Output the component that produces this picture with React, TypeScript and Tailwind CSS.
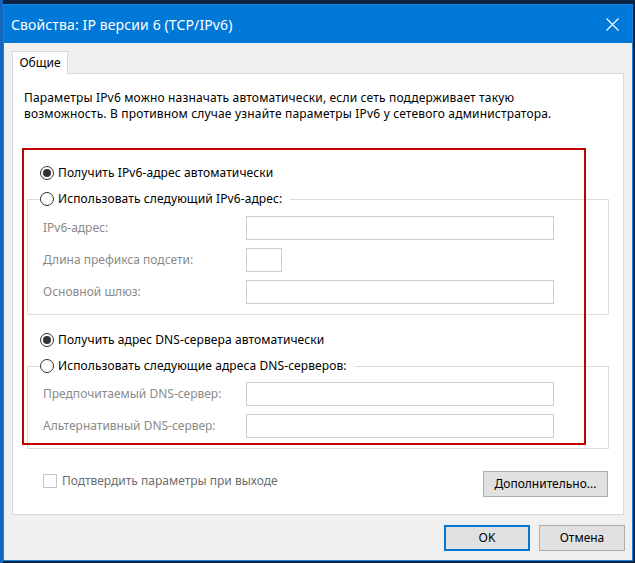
import React from "react";

function Radio({ checked, label }: { checked?: boolean; label: string }) {
  return (
    <div className="flex items-center h-[16px] gap-[4px]">
      <span className="w-[14px] h-[14px] rounded-full border border-[#333333] bg-white flex items-center justify-center shrink-0">
        {checked && <span className="w-[8px] h-[8px] rounded-full bg-[#333333]" />}
      </span>
      <span className="leading-[16px] whitespace-nowrap tracking-[0.1px]">{label}</span>
    </div>
  );
}

function Field({ label, narrow }: { label: string; narrow?: boolean }) {
  return (
    <div className="flex items-center h-[24px]">
      <span className="w-[218px] pl-[15px] shrink-0 text-[#8a8a8a] whitespace-nowrap">{label}</span>
      <div className={(narrow ? "w-[36px]" : "w-[308px]") + " h-[24px] border border-[#cccccc] bg-white"} />
    </div>
  );
}

export default function App() {
  return (
    <div className="w-[635px] h-[563px] bg-[#0c2444] border-l-[3px] border-l-[#1566bf] pt-[4px] overflow-hidden font-['Noto_Sans',sans-serif] text-[12px] text-black">
      <div className="w-[630px] h-[557px] border border-[#1883d7] bg-[#f0f0f0] flex flex-col">
        <div className="h-[38px] shrink-0 bg-[#0078d7] flex items-center justify-between pl-[7px] pr-[13px] text-white">
          <span className="text-[14px] tracking-[0.12px]">Свойства: IP версии 6 (TCP/IPv6)</span>
          <svg width="13" height="13" viewBox="0 0 13 13">
            <path d="M0.5 0.5L12.5 12.5M12.5 0.5L0.5 12.5" stroke="white" strokeWidth="1.1" fill="none" />
          </svg>
        </div>
        <div className="px-[8px] pt-[8px] flex flex-col">
          <div className="w-[56px] h-[23px] border border-b-0 border-[#d9d9d9] bg-white relative z-10 flex items-center justify-center">
            <span className="leading-[16px]">Общие</span>
          </div>
          <div className="mt-[-1px] w-[612px] h-[442px] border border-[#d9d9d9] bg-white relative flex flex-col">
            <div className="ml-[11px] mt-[16px] tracking-[0.17px]">
              <div className="h-[16px] leading-[16px] whitespace-nowrap">
                Параметры IPv6 можно назначать автоматически, если сеть поддерживает такую
              </div>
              <div className="h-[16px] leading-[16px] whitespace-nowrap">
                возможность. В противном случае узнайте параметры IPv6 у сетевого администратора.
              </div>
            </div>

            <div className="ml-[27px] mt-[43px]">
              <Radio checked label="Получить IPv6-адрес автоматически" />
            </div>
            <div className="ml-[27px] mt-[10px] relative z-10 bg-white w-fit pr-[8px]">
              <Radio label="Использовать следующий IPv6-адрес:" />
            </div>
            <div className="ml-[14px] w-[582px] mt-[-8px] border border-[#dcdcdc] pt-[16px] pb-[10px] flex flex-col gap-[8px]">
              <Field label="IPv6-адрес:" />
              <Field label="Длина префикса подсети:" narrow />
              <Field label="Основной шлюз:" />
            </div>

            <div className="ml-[27px] mt-[17px]">
              <Radio checked label="Получить адрес DNS-сервера автоматически" />
            </div>
            <div className="ml-[27px] mt-[10px] relative z-10 bg-white w-fit pr-[8px]">
              <Radio label="Использовать следующие адреса DNS-серверов:" />
            </div>
            <div className="ml-[14px] w-[582px] mt-[-8px] border border-[#dcdcdc] pt-[15px] pb-[10px] flex flex-col gap-[8px]">
              <Field label="Предпочитаемый DNS-сервер:" />
              <Field label="Альтернативный DNS-сервер:" />
            </div>

            <div className="mt-[22px] ml-[30px] mr-[15px] flex justify-between items-start">
              <div className="flex items-center h-[18px] gap-[5px] mt-[1px]">
                <span className="w-[14px] h-[14px] border border-[#c4c4c4] bg-white shrink-0" />
                <span className="text-[#6d6d6d] whitespace-nowrap">Подтвердить параметры при выходе</span>
              </div>
              <div className="w-[125px] h-[26px] bg-[#e1e1e1] border border-[#adadad] flex items-center justify-center">
                Дополнительно...
              </div>
            </div>

            <div className="absolute left-[9px] top-[74px] w-[564px] h-[297px] border-2 border-[#c00000] pointer-events-none" />
          </div>
          <div className="mt-[10px] flex justify-end gap-[9px]">
            <div className="w-[86px] h-[26px] bg-[#e1e1e1] border-2 border-[#0078d7] flex items-center justify-center">
              OK
            </div>
            <div className="w-[86px] h-[26px] bg-[#e1e1e1] border border-[#adadad] flex items-center justify-center mr-[-1px]">
              Отмена
            </div>
          </div>
        </div>
      </div>
    </div>
  );
}
